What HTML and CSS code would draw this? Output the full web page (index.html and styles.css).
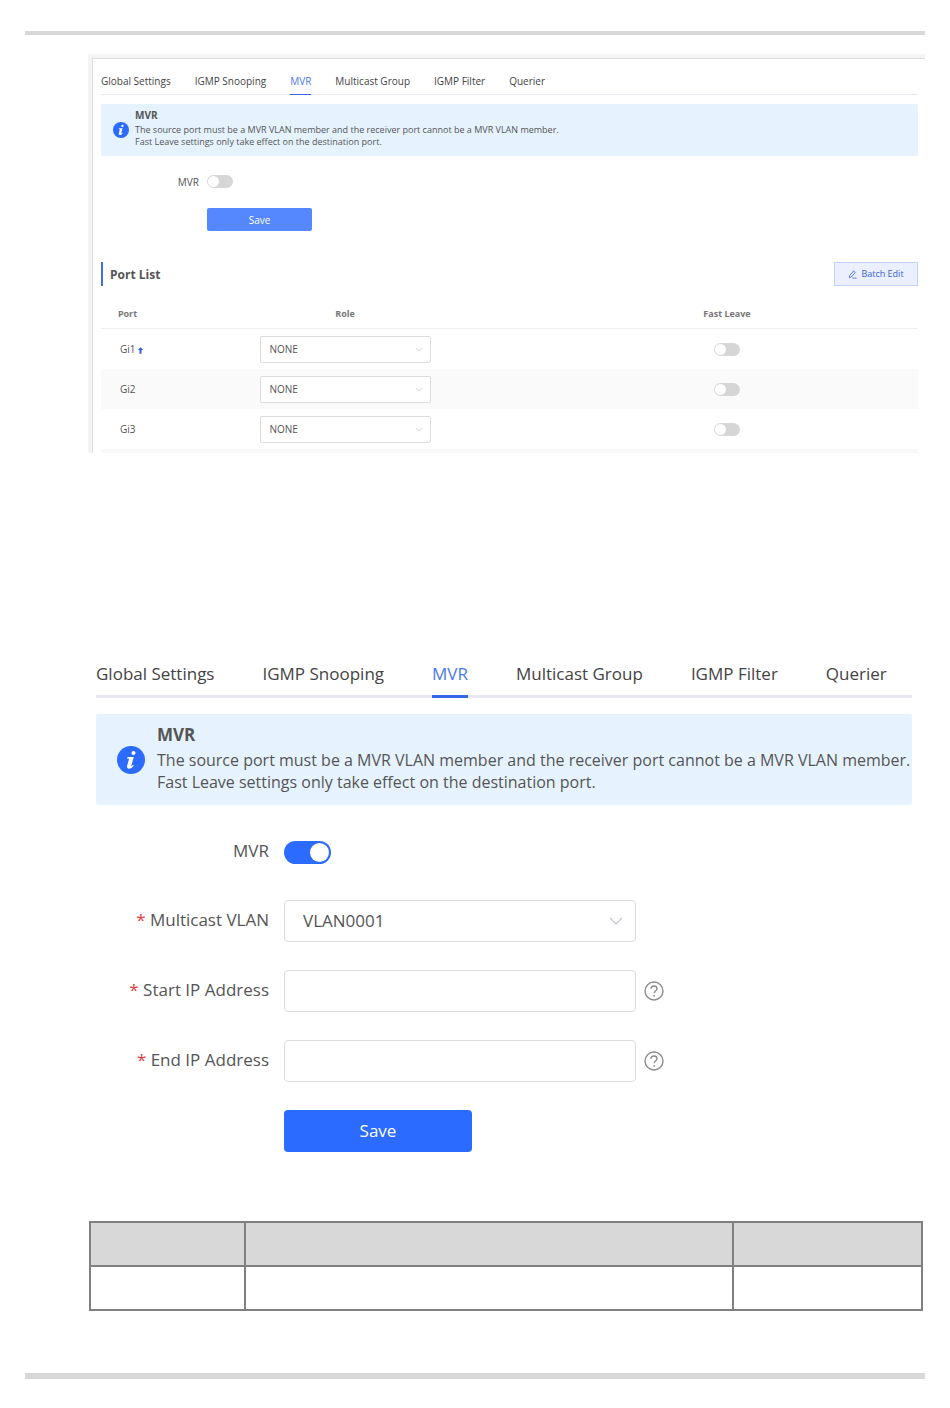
FILE: index.html
```
<!DOCTYPE html>
<html lang="en">
<head>
    <meta charset="UTF-8">
    <meta name="viewport" content="width=device-width, initial-scale=1.0">
    <title>MVR</title>
    <link rel="stylesheet" href="styles.css">
</head>
<body>
    <!-- shared icons -->
    <svg class="icon-defs" aria-hidden="true">
        <symbol id="icon-info" viewBox="0 0 28 28">
            <circle cx="14" cy="14" r="14" fill="#2b6bff"/>
            <circle cx="16.500" cy="7" r="2" fill="#fff"/>
            <path d="M10.500 11h6.300l-2.700 9.300q.9-.2 1.900-1.500l.9.700q-2.400 3.500-5.200 3.200-2.300-.4-1.500-3.200l1.900-6.700h-1.900z" fill="#fff"/>
        </symbol>
        <symbol id="icon-arrow" viewBox="0 0 14 8">
            <path d="M1 1l6 6 6-6" fill="none" stroke="#c0c4cc" stroke-width="1.2"/>
        </symbol>
        <symbol id="icon-help" viewBox="0 0 20 20">
            <circle cx="10" cy="10" r="9" fill="none" stroke="#8c8c8c" stroke-width="1.4"/>
            <path d="M7 7.800C7 6 8.300 5 10 5s3 1 3 2.700C13 9.700 10.200 9.800 10.200 12.300" fill="none" stroke="#8c8c8c" stroke-width="1.4"/>
            <circle cx="10.200" cy="14.800" r="0.900" fill="#8c8c8c"/>
        </symbol>
    </svg>

    <div class="page">
        <hr class="rule">

        <section class="panel panel-small">
            <nav class="tabs">
                <a href="#">Global Settings</a>
                <a href="#">IGMP Snooping</a>
                <a href="#" class="active">MVR</a>
                <a href="#">Multicast Group</a>
                <a href="#">IGMP Filter</a>
                <a href="#">Querier</a>
            </nav>
            <div class="notice">
                <svg class="notice-icon"><use href="#icon-info"/></svg>
                <div class="notice-text">
                    <h3>MVR</h3>
                    <p>The source port must be a MVR VLAN member and the receiver port cannot be a MVR VLAN member.<br>Fast Leave settings only take effect on the destination port.</p>
                </div>
            </div>
            <form class="form">
                <label for="mvr-off">MVR</label>
                <input type="checkbox" class="switch" id="mvr-off">
                <button type="button" class="btn-save">Save</button>
            </form>
            <div class="list-head">
                <h2>Port List</h2>
                <button type="button" class="btn-batch">
                    <svg viewBox="0 0 10 10"><path d="M1.500 8.500l.4-2.400L6.200 1l1.900 1.600L3.800 7.700zM5 9h4.500" fill="none" stroke="#4a6fe0"/></svg>
                    Batch Edit
                </button>
            </div>
            <table class="ports">
                <thead>
                    <tr>
                        <th class="col-port">Port</th>
                        <th>Role</th>
                        <th>Fast Leave</th>
                    </tr>
                </thead>
                <tbody>
                    <tr>
                        <td class="port">Gi1 <svg viewBox="0 0 6 8"><path d="M3 0l3 3.500H4.200V8H1.800V3.500H0z" fill="#2b5bea"/></svg></td>
                        <td>
                            <div class="select">
                                <select aria-label="Role Gi1"><option>NONE</option></select>
                                <svg><use href="#icon-arrow"/></svg>
                            </div>
                        </td>
                        <td><input type="checkbox" class="switch" aria-label="Fast Leave Gi1"></td>
                    </tr>
                    <tr>
                        <td class="port">Gi2</td>
                        <td>
                            <div class="select">
                                <select aria-label="Role Gi2"><option>NONE</option></select>
                                <svg><use href="#icon-arrow"/></svg>
                            </div>
                        </td>
                        <td><input type="checkbox" class="switch" aria-label="Fast Leave Gi2"></td>
                    </tr>
                    <tr>
                        <td class="port">Gi3</td>
                        <td>
                            <div class="select">
                                <select aria-label="Role Gi3"><option>NONE</option></select>
                                <svg><use href="#icon-arrow"/></svg>
                            </div>
                        </td>
                        <td><input type="checkbox" class="switch" aria-label="Fast Leave Gi3"></td>
                    </tr>
                </tbody>
            </table>
        </section>

        <section class="panel panel-large">
            <nav class="tabs">
                <a href="#">Global Settings</a>
                <a href="#">IGMP Snooping</a>
                <a href="#" class="active">MVR</a>
                <a href="#">Multicast Group</a>
                <a href="#">IGMP Filter</a>
                <a href="#">Querier</a>
            </nav>
            <div class="notice">
                <svg class="notice-icon"><use href="#icon-info"/></svg>
                <div class="notice-text">
                    <h3>MVR</h3>
                    <p>The source port must be a MVR VLAN member and the receiver port cannot be a MVR VLAN member.<br>Fast Leave settings only take effect on the destination port.</p>
                </div>
            </div>
            <form class="form">
                <label for="mvr-on">MVR</label>
                <input type="checkbox" class="switch" id="mvr-on" checked>

                <label for="vlan"><span class="required">*</span> Multicast VLAN</label>
                <div class="select">
                    <select id="vlan"><option>VLAN0001</option></select>
                    <svg><use href="#icon-arrow"/></svg>
                </div>

                <label for="start-ip"><span class="required">*</span> Start IP Address</label>
                <div class="field">
                    <input type="text" id="start-ip">
                    <svg><use href="#icon-help"/></svg>
                </div>

                <label for="end-ip"><span class="required">*</span> End IP Address</label>
                <div class="field">
                    <input type="text" id="end-ip">
                    <svg><use href="#icon-help"/></svg>
                </div>

                <button type="button" class="btn-save">Save</button>
            </form>
        </section>

        <table class="params">
            <thead>
                <tr><th class="col-name"></th><th></th><th class="col-value"></th></tr>
            </thead>
            <tbody>
                <tr><td></td><td></td><td></td></tr>
            </tbody>
        </table>

        <hr class="rule rule-bottom">
    </div>
</body>
</html>
```
FILE: styles.css
```
* {
    box-sizing: border-box;
}
body {
    margin: 0;
    background: #fff;
    color: #555;
    font-family: "Open Sans", "Noto Sans", sans-serif;
}
h2, h3, p {
    margin: 0;
}
button, input, select {
    font: inherit;
    margin: 0;
}
.icon-defs {
    position: absolute;
    width: 0;
    height: 0;
}
.page {
    padding: 31px 25px;
}
.rule {
    height: 4px;
    margin: 0;
    border: none;
    background: #d8d8d8;
}
.rule-bottom {
    height: 6px;
    margin-top: 62px;
}

/* tabs */
.tabs {
    display: flex;
    border-bottom: 1px solid #e8e8ee;
}
.tabs a {
    color: #444;
    text-decoration: none;
    white-space: nowrap;
}
.tabs a.active {
    color: #4a78f0;
    border-bottom: 1px solid #3566e8;
}

/* blue notice */
.notice {
    display: flex;
    align-items: center;
    background: #e6f3fe;
    border-radius: 2px;
}
.notice-icon {
    flex: none;
}
.notice-text {
    padding-bottom: 6px;
}

/* form parts */
.form {
    display: grid;
    align-items: center;
    justify-items: start;
}
.form label {
    justify-self: end;
}
.required {
    color: #e04040;
}
.switch {
    appearance: none;
    display: block;
    width: 26px;
    height: 13px;
    padding: 1px;
    border-radius: 12px;
    background: #d6d6d6;
}
.switch::before {
    content: "";
    display: block;
    height: 100%;
    aspect-ratio: 1;
    border-radius: 50%;
    background: #fff;
}
.switch:checked {
    background: #2b6bff;
}
.switch:checked::before {
    margin-left: auto;
}
.btn-save {
    grid-column: 2;
    border: none;
    border-radius: 2px;
    color: #fff;
}
.select {
    position: relative;
}
.select select {
    appearance: none;
    width: 100%;
    height: 100%;
    border: 1px solid #dcdcdc;
    border-radius: 2px;
    background: #fff;
    color: #555;
}
.select svg {
    position: absolute;
    top: 0;
    bottom: 0;
    margin: auto;
}

/* port list panel */
.panel-small {
    margin: 19px 0 0 63px;
    padding: 16px 7px 0 9px;
    border-top: 4px solid #f4f4f4;
    border-left: 4px solid #f4f4f4;
    box-shadow: inset 1px 1px 0 #dedede;
    font-size: 10px;
    line-height: 12px;
}
.panel-small .tabs {
    gap: 24px;
}
.panel-small .tabs a {
    padding: 1px 0 7px;
    margin-bottom: -1px;
}
.panel-small .tabs a:not(.active) {
    border-bottom: 1px solid transparent;
}
.panel-small .notice {
    height: 52px;
    margin-top: 9px;
    padding-left: 12px;
    gap: 6px;
}
.panel-small .notice h3 {
    font-size: 10px;
    line-height: 18px;
}
.panel-small .notice p {
    font-size: 9px;
}
.panel-small .notice-icon {
    width: 16px;
    height: 16px;
}
.panel-small .form {
    grid-template-columns: 98px 1fr;
    column-gap: 8px;
    row-gap: 20px;
    margin-top: 19px;
}
.panel-small .btn-save {
    width: 105px;
    height: 23px;
    background: #5588ff;
}
.list-head {
    display: flex;
    justify-content: space-between;
    margin-top: 31px;
}
.list-head h2 {
    padding: 2px 0 0 7px;
    border-left: 2px solid #3f6df0;
    font-size: 12px;
    line-height: 22px;
}
.btn-batch {
    display: flex;
    align-items: center;
    justify-content: center;
    gap: 4px;
    width: 84px;
    height: 24px;
    padding: 0;
    border: 1px solid #c3d2f8;
    background: #eaf0fe;
    color: #3a62d8;
    font-size: 9px;
}
.btn-batch svg {
    width: 9px;
    height: 9px;
}
.ports {
    width: 100%;
    margin-top: 14px;
    border-spacing: 0;
    border-bottom: 4px solid #f8f8f8;
    table-layout: fixed;
}
.ports th {
    height: 29px;
    padding: 0;
    border-bottom: 1px solid #eee;
    color: #777;
    font-size: 9px;
}
.ports td {
    height: 40px;
    padding: 0;
}
.ports tbody tr:nth-child(even) {
    background: #fafafa;
}
.ports .col-port {
    width: 53px;
}
.ports .port {
    padding-left: 19px;
    white-space: nowrap;
}
.port svg {
    width: 5px;
    height: 7px;
    vertical-align: -1px;
}
.ports .select {
    width: 171px;
    height: 27px;
    margin: 0 auto;
}
.ports select {
    padding: 0 9px;
}
.ports .select svg {
    right: 8px;
    width: 8px;
    height: 5px;
}
.ports .switch {
    margin: 0 auto;
}

/* settings panel */
.panel-large {
    margin: 208px 13px 0 71px;
    font-size: 17px;
    line-height: 22px;
}
.panel-large .tabs {
    gap: 48px;
    border-bottom: 3px solid #e8e8f4;
}
.panel-large .tabs a {
    padding: 2px 0 10px;
    margin-bottom: -3px;
}
.panel-large .tabs a.active {
    border-bottom: 3px solid #3566e8;
}
.panel-large .notice {
    height: 91px;
    margin-top: 16px;
    padding-left: 21px;
    gap: 12px;
}
.panel-large .notice h3 {
    font-size: 17px;
    line-height: 29px;
}
.panel-large .notice p {
    font-size: 16px;
    white-space: nowrap;
}
.panel-large .notice-icon {
    width: 28px;
    height: 28px;
}
.panel-large .form {
    grid-template-columns: 173px 1fr;
    column-gap: 15px;
    row-gap: 28px;
    margin-top: 35px;
}
.panel-large .form label {
    padding-bottom: 2px;
}
.panel-large .form label:first-child,
.panel-large .switch {
    margin-bottom: 8px;
}
.panel-large .switch {
    width: 47px;
    height: 23px;
    padding: 2px;
}
.panel-large .btn-save {
    width: 188px;
    height: 42px;
    border-radius: 4px;
    background: #2b6bff;
}
.panel-large .select,
.field input {
    width: 352px;
    height: 42px;
}
.panel-large select {
    padding: 0 18px;
    border-radius: 4px;
}
.panel-large .select svg {
    right: 13px;
    width: 14px;
    height: 8px;
}
.field {
    display: flex;
    align-items: center;
    gap: 8px;
}
.field input {
    padding: 0 18px;
    border: 1px solid #dcdcdc;
    border-radius: 4px;
}
.field svg {
    width: 20px;
    height: 20px;
}

/* parameter table */
.params {
    width: calc(100% - 66px);
    margin: 69px 2px 0 64px;
    border-collapse: collapse;
    table-layout: fixed;
}
.params th,
.params td {
    height: 44px;
    padding: 0;
    border: 2px solid #808080;
}
.params th {
    background: #d8d8d8;
}
.params .col-name {
    width: 155px;
}
.params .col-value {
    width: 189px;
}
```
